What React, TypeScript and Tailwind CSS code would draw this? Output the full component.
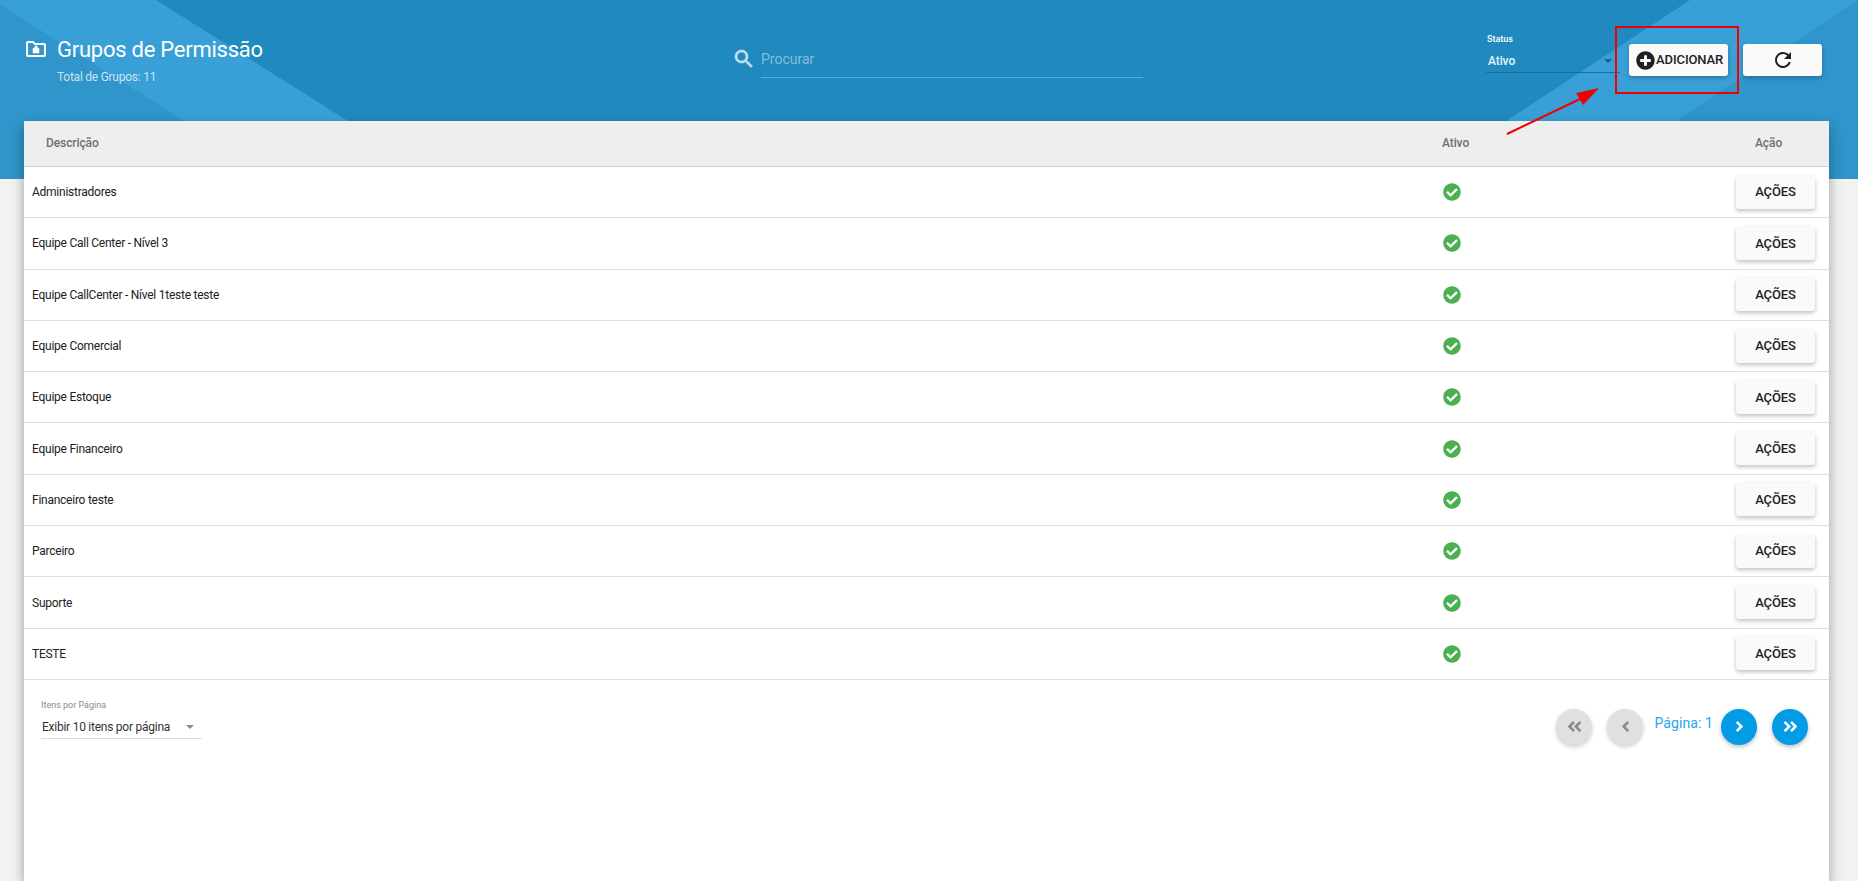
import { FaAngleDoubleLeft, FaAngleDoubleRight, FaAngleLeft, FaAngleRight, FaCheckCircle, FaPlusCircle } from "react-icons/fa";

const groups = [
  "Administradores",
  "Equipe Call Center - Nível 3",
  "Equipe CallCenter - Nível 1teste teste",
  "Equipe Comercial",
  "Equipe Estoque",
  "Equipe Financeiro",
  "Financeiro teste",
  "Parceiro",
  "Suporte",
  "TESTE",
];

function HeaderBackground() {
  return (
    <svg className="absolute inset-0 h-full w-full" viewBox="0 0 1858 179" preserveAspectRatio="none">
      <rect width="1858" height="179" fill="#2089bf" />
      <polygon points="0,5 276,179 0,179" fill="#2f95cb" />
      <polygon points="0,0 156,0 440,179 276,179 0,5" fill="#38a0d6" />
      <polygon points="1690,0 1858,0 1590,179 1418,179" fill="#38a0d6" />
      <polygon points="1858,0 1858,179 1590,179" fill="#2f95cb" />
    </svg>
  );
}

function Caret({ color }: { color: string }) {
  return (
    <svg width="8" height="4" viewBox="0 0 8 4" className={color}>
      <polygon points="0,0 8,0 4,4" fill="currentColor" />
    </svg>
  );
}

function Annotation() {
  return (
    <>
      <div className="absolute left-[1615px] top-[26px] h-[68px] w-[124px] border-[2px] border-[#f00000]" />
      <svg className="absolute left-[1500px] top-[80px]" width="110" height="60" viewBox="0 0 110 60">
        <line x1="7" y1="54" x2="80" y2="19" stroke="#f00000" strokeWidth="2" />
        <polygon points="99,8 76,13 83,25" fill="#f00000" />
      </svg>
    </>
  );
}

function PageButton({ active, children }: { active?: boolean; children: React.ReactNode }) {
  return (
    <button
      className={
        active
          ? "flex h-9 w-9 items-center justify-center rounded-full bg-[#039be5] text-[17px] text-white shadow-[0_2px_4px_rgba(0,0,0,0.25)]"
          : "flex h-9 w-9 items-center justify-center rounded-full bg-[#e0e0e0] text-[17px] text-[#8a8a8a] shadow-[0_2px_4px_rgba(0,0,0,0.2)]"
      }
    >
      {children}
    </button>
  );
}

export default function App() {
  return (
    <div className="relative h-[881px] overflow-hidden bg-[#f2f2f2] font-['Roboto',sans-serif]">
      <header className="relative flex h-[179px] shadow-[inset_0_2px_1px_rgba(0,0,0,0.1),inset_0_-2px_2px_rgba(0,0,0,0.05)]">
        <HeaderBackground />

        <div className="relative flex w-[735px] items-start pl-[26px] pt-[38px]">
          <svg width="20" height="16" viewBox="0 0 20 16" className="mt-[3px]">
            <path d="M1 2a1 1 0 0 1 1-1h5l2 2h9a1 1 0 0 1 1 1v10a1 1 0 0 1-1 1H2a1 1 0 0 1-1-1z" fill="none" stroke="white" strokeWidth="2" />
            <path d="M7 7.5h6v4.5H7z M8.5 7.5V6.5a1.5 1.5 0 0 1 3 0v1" fill="white" stroke="white" strokeWidth="0.6" />
          </svg>
          <div className="ml-[11px] tracking-[-0.25px]">
            <h1 className="text-[22px] leading-[24px] text-white">Grupos de Permissão</h1>
            <p className="mt-[8px] text-[12px] leading-[14px] text-white/75">Total de Grupos: 11</p>
          </div>
        </div>

        <div className="relative mt-[47px] flex h-[31px] items-start">
          <svg width="24" height="24" viewBox="0 0 24 24" className="ml-[-3px] text-white/70">
            <path
              fill="currentColor"
              stroke="currentColor"
              strokeWidth="0.6"
              d="M15.5 14h-.79l-.28-.27C15.41 12.59 16 11.11 16 9.5 16 5.91 13.09 3 9.5 3S3 5.91 3 9.5 5.91 16 9.5 16c1.61 0 3.09-.59 4.23-1.57l.27.28v.79l5 4.99L20.49 19l-4.99-5zm-6 0C7.01 14 5 11.99 5 9.5S7.01 5 9.5 5 14 7.01 14 9.5 11.99 14 9.5 14z"
            />
          </svg>
          <div className="ml-[5px] h-[31px] w-[382px] border-b border-[#5aa9da] text-[14px] leading-[24px] text-white/45">
            Procurar
          </div>
        </div>

        <div className="relative ml-[343px] mt-[33px] h-[40px] w-[134px] border-b border-[#1d6d99]">
          <div className="pl-[1px] text-[9px] font-medium leading-[12px] text-white">Status</div>
          <div className="mt-[6px] flex items-center justify-between pl-[2px] pr-[8px] text-[12px] font-medium leading-[20px] text-white/90">
            <span className="tracking-[-0.1px]">Ativo</span>
            <Caret color="text-[#1d5f82]" />
          </div>
        </div>

        <div className="relative ml-[9px] mt-[44px] flex h-[32px] gap-[15px]">
          <button className="flex w-[99px] items-center rounded-[3px] bg-[#fafafa] pl-[7px] text-[13px] font-medium tracking-[-0.1px] text-[#212121] shadow-[0_2px_4px_rgba(0,0,0,0.25)]">
            <FaPlusCircle className="text-[19px]" />
            <span className="ml-[1px]">ADICIONAR</span>
          </button>
          <button className="flex w-[79px] items-center justify-center rounded-[3px] bg-[#fafafa] text-[#212121] shadow-[0_2px_4px_rgba(0,0,0,0.25)]">
            <svg width="24" height="24" viewBox="0 0 24 24">
              <path
                fill="currentColor"
                d="M17.65 6.35C16.2 4.9 14.21 4 12 4c-4.42 0-7.99 3.58-7.99 8s3.57 8 7.99 8c3.73 0 6.84-2.55 7.73-6h-2.08c-.82 2.33-3.04 4-5.65 4-3.31 0-6-2.69-6-6s2.69-6 6-6c1.66 0 3.14.69 4.22 1.78L13 11h7V4l-2.35 2.35z"
              />
            </svg>
          </button>
        </div>
      </header>

      <main className="relative ml-6 mr-[29px] mt-[-58px] h-[760px] bg-white shadow-[0_6px_12px_rgba(0,0,0,0.35)]">
        <div className="grid h-[46px] grid-cols-[1418px_313px_auto] items-center border-b border-[#d2d2d2] bg-[#eeeeee] pb-[2px] text-[12px] font-medium tracking-[-0.1px] text-[#6e6e6e]">
          <span className="pl-[22px]">Descrição</span>
          <span>Ativo</span>
          <span>Ação</span>
        </div>

        {groups.map((name) => (
          <div
            key={name}
            className="grid h-[51.3px] grid-cols-[1418px_294px_auto] items-center border-b border-[#e0e0e0] text-[12px] text-[#212121]"
          >
            <span className="pl-[8px] tracking-[-0.25px]">{name}</span>
            <FaCheckCircle className="ml-[1px] text-[18px] text-[#4caf50]" />
            <button className="h-[33px] w-[79px] rounded-[3px] bg-[#fafafa] text-[13px] font-medium tracking-[-0.1px] shadow-[0_2px_4px_rgba(0,0,0,0.25)]">
              AÇÕES
            </button>
          </div>
        ))}

        <div className="flex items-start justify-between pl-[17px] pr-[21px] pt-[29px]">
          <div className="mt-[-10px] w-[161px] border-b border-[#dddddd] pb-[1px]">
            <div className="text-[9px] leading-[12px] text-[#8a8a8a]">Itens por Página</div>
            <div className="mt-[6px] flex items-center justify-between pl-[1px] pr-[8px] text-[12px] leading-[20px] text-[#333333]">
              <span className="tracking-[-0.25px]">Exibir 10 itens por página</span>
              <Caret color="text-[#8a8a8a]" />
            </div>
          </div>

          <div className="flex items-start">
            <PageButton><FaAngleDoubleLeft /></PageButton>
            <div className="ml-[15px]"><PageButton><FaAngleLeft /></PageButton></div>
            <span className="ml-[11px] mr-[8px] text-[14px] leading-[28px] tracking-[0.1px] text-[#1fa5ef]">Página: 1</span>
            <PageButton active><FaAngleRight /></PageButton>
            <div className="ml-[15px]"><PageButton active><FaAngleDoubleRight /></PageButton></div>
          </div>
        </div>
      </main>

      <Annotation />
    </div>
  );
}
